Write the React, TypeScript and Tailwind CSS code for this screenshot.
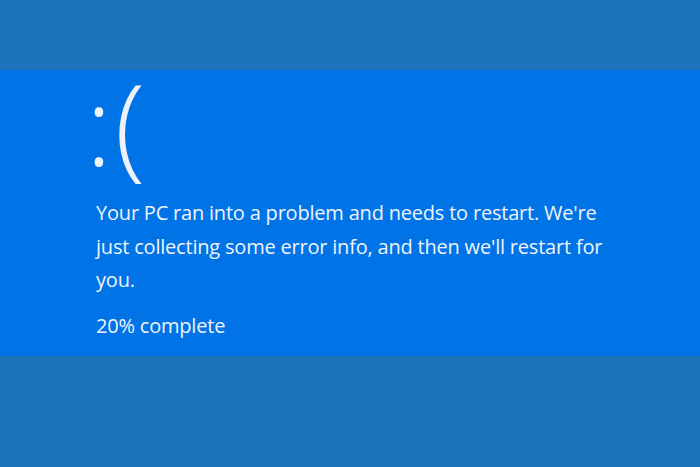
export default function App() {
  return (
    <div className="w-[700px] h-[467px] bg-[#1d74bb] flex flex-col" style={{ fontFamily: '"Open Sans", "Noto Sans", sans-serif' }}>
      <div className="h-[70px] shrink-0" />
      <div className="h-[286px] shrink-0 bg-[#0073e6] text-[#eef3fb] pl-[96px]">
        <div className="leading-[80px] font-light mt-[13px] h-[80px] ml-[-10px] whitespace-nowrap">
          <span className="text-[108px] inline-block">:</span>
          <span className="text-[112px] inline-block ml-[3px]">(</span>
        </div>
        <div className="text-[20px] tracking-[-0.2px] leading-[33.5px] mt-[33px] w-[540px]">
          Your PC ran into a problem and needs to restart. We're<br />just collecting some error info, and then we'll restart for<br />you.
        </div>
        <div className="text-[20px] tracking-[-0.2px] leading-[33.5px] mt-[12px]">20% complete</div>
      </div>
    </div>
  );
}
